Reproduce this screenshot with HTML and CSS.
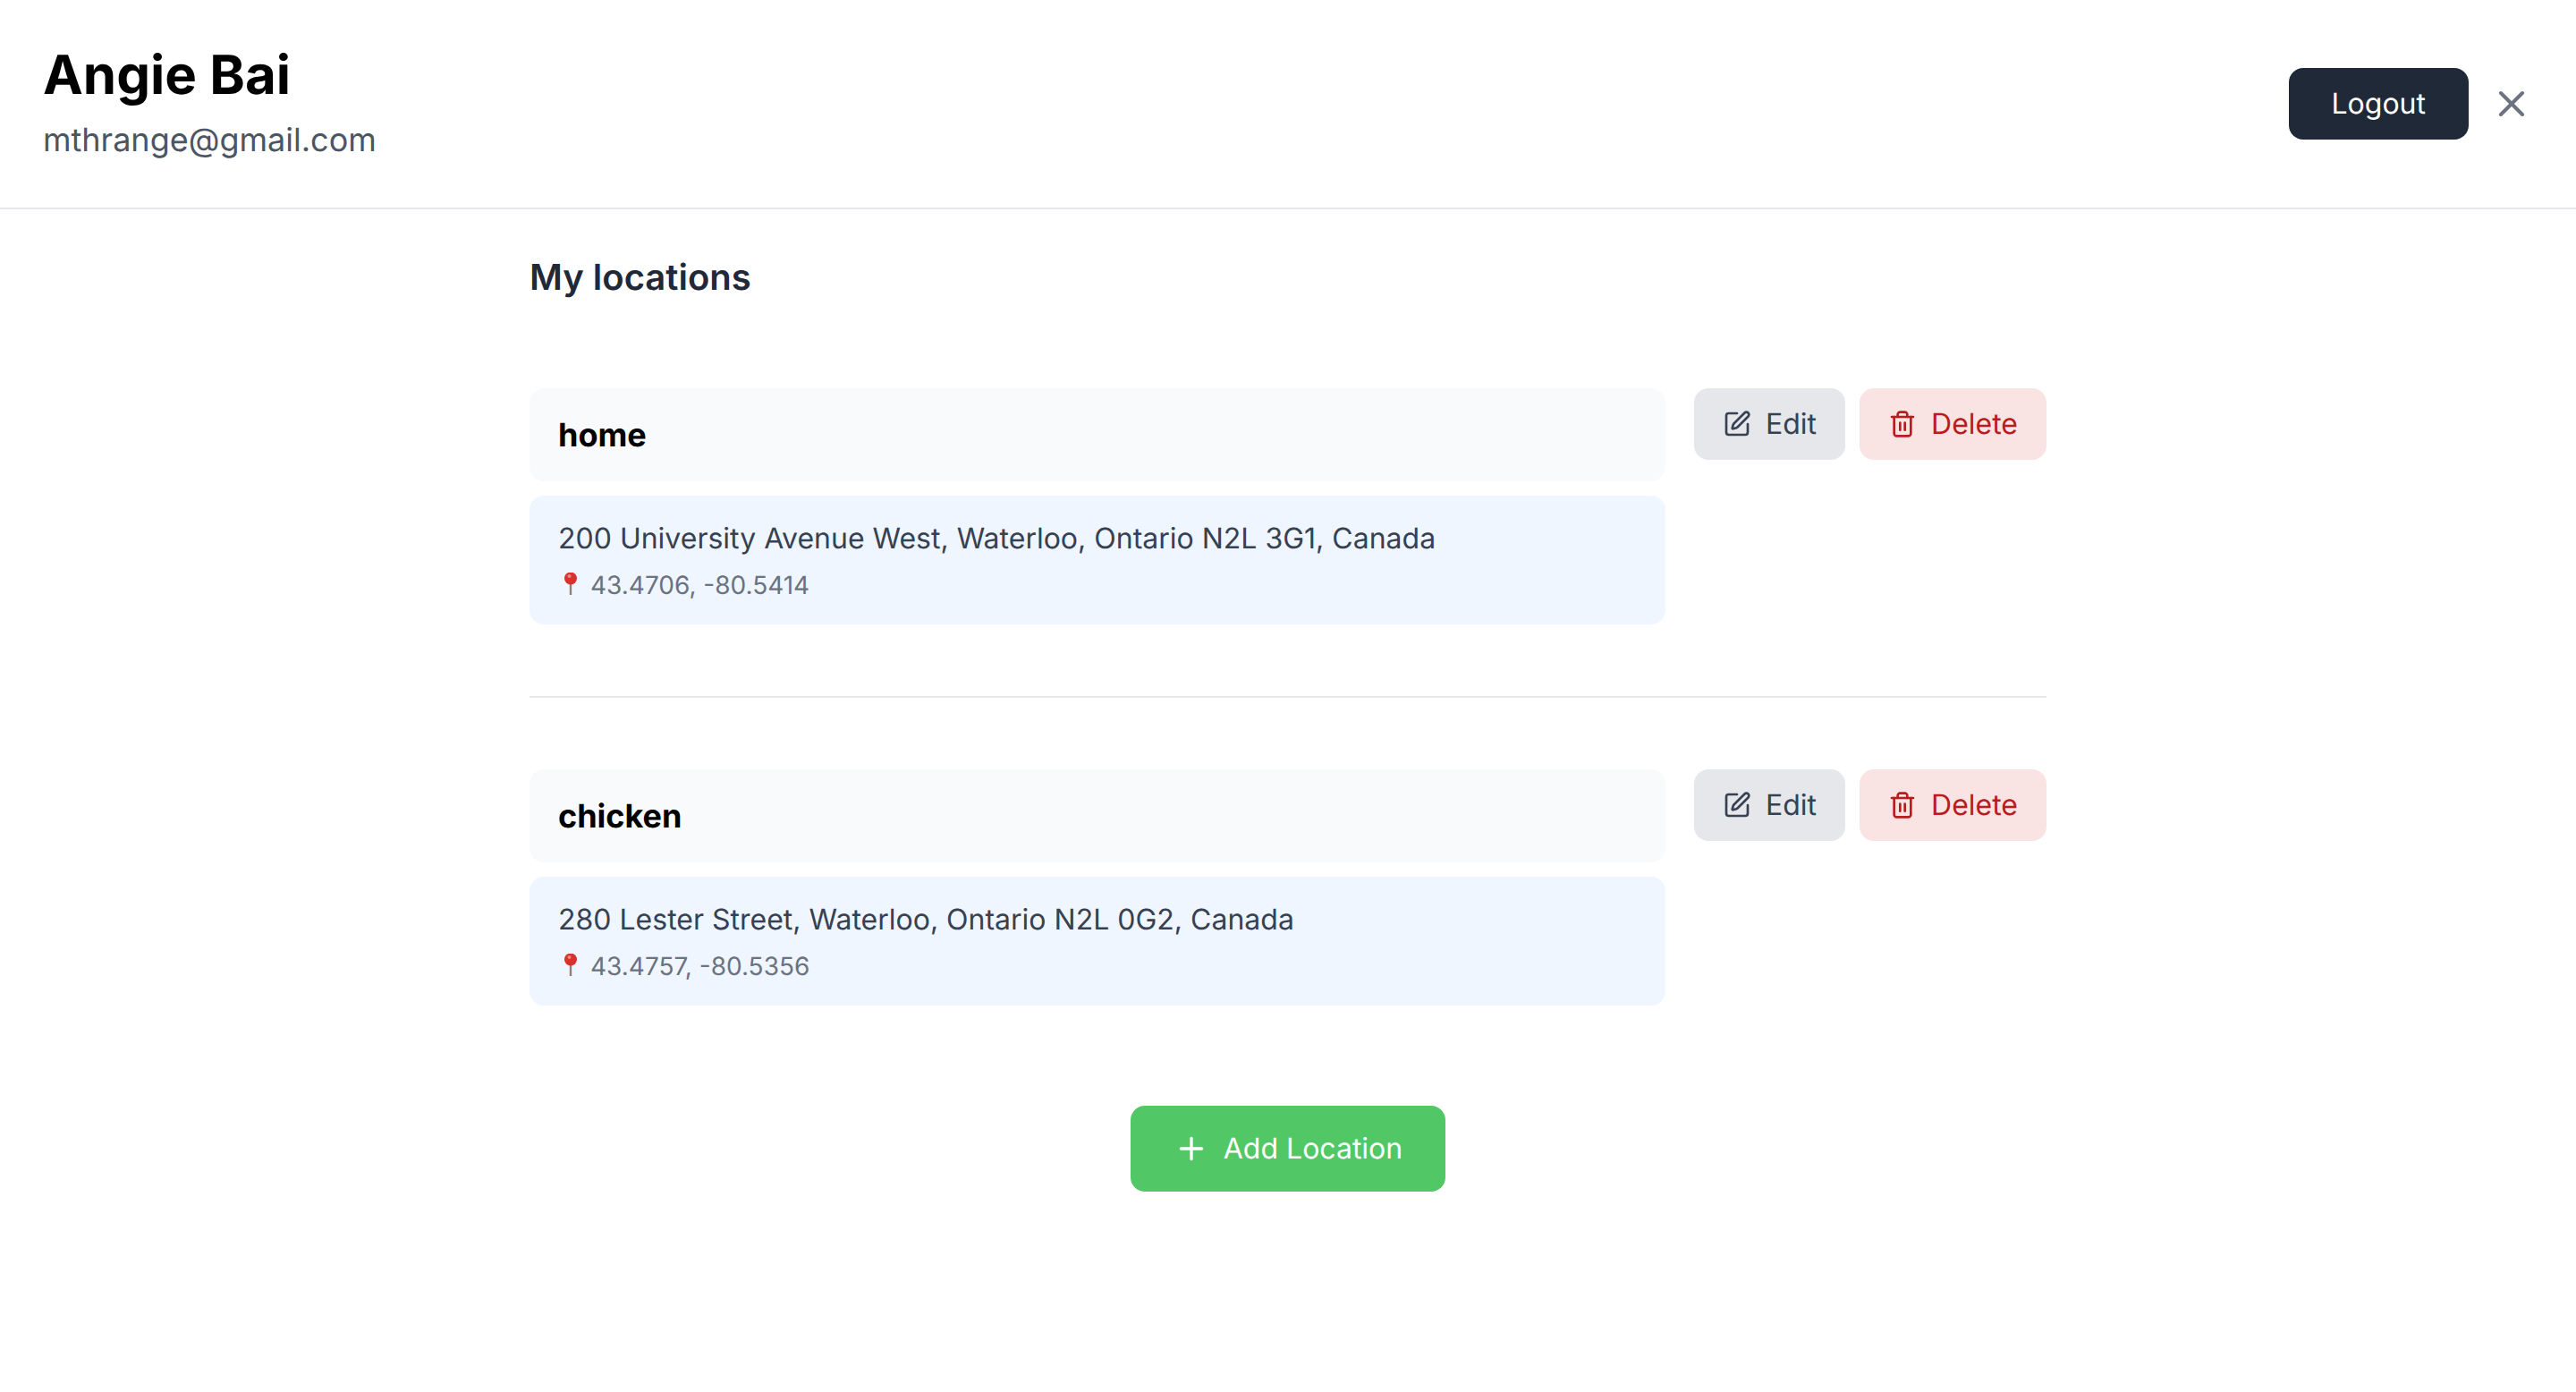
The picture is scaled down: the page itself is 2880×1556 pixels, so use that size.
FILE: index.html
```html
<!DOCTYPE html>
<html lang="en">
<head>
    <meta charset="UTF-8">
    <meta name="viewport" content="width=device-width, initial-scale=1.0">
    <title>My locations</title>
    <link rel="stylesheet" href="styles.css">
</head>
<body>
    <header class="profile-header">
        <div>
            <h1 class="profile-name">Angie Bai</h1>
            <p class="profile-email">mthrange@gmail.com</p>
        </div>
        <div class="header-actions">
            <button class="btn btn-logout" type="button">Logout</button>
            <button class="btn-close" type="button" aria-label="Close">
                <svg class="icon-close" viewBox="0 0 24 24"><path d="M18 6 6 18"/><path d="m6 6 12 12"/></svg>
            </button>
        </div>
    </header>

    <main class="container">
        <h2 class="section-title">My locations</h2>

        <div class="location-row">
            <div class="location-info">
                <div class="location-name">home</div>
                <div class="location-address">
                    <p class="address-line">200 University Avenue West, Waterloo, Ontario N2L 3G1, Canada</p>
                    <p class="coords"><svg class="pin" viewBox="0 0 28 28"><path class="pin-stem" d="M14 12v13"/><circle class="pin-head" cx="14" cy="6.5" r="7"/><circle class="pin-shine" cx="12.5" cy="4" r="2"/></svg>43.4706, -80.5414</p>
                </div>
            </div>
            <div class="location-actions">
                <button class="btn btn-edit" type="button">
                    <svg class="icon" viewBox="0 0 24 24"><path d="M12 3H5a2 2 0 0 0-2 2v14a2 2 0 0 0 2 2h14a2 2 0 0 0 2-2v-7"/><path d="M18.375 2.625a1 1 0 0 1 3 3l-9.013 9.014a2 2 0 0 1-.853.505l-2.873.84a.5.5 0 0 1-.62-.62l.84-2.873a2 2 0 0 1 .506-.852z"/></svg>
                    Edit
                </button>
                <button class="btn btn-delete" type="button">
                    <svg class="icon" viewBox="0 0 24 24"><path d="M3 6h18"/><path d="M19 6v14c0 1-1 2-2 2H7c-1 0-2-1-2-2V6"/><path d="M8 6V4c0-1 1-2 2-2h4c1 0 2 1 2 2v2"/><path d="M10 11v6"/><path d="M14 11v6"/></svg>
                    Delete
                </button>
            </div>
        </div>

        <hr class="divider">

        <div class="location-row">
            <div class="location-info">
                <div class="location-name">chicken</div>
                <div class="location-address">
                    <p class="address-line">280 Lester Street, Waterloo, Ontario N2L 0G2, Canada</p>
                    <p class="coords"><svg class="pin" viewBox="0 0 28 28"><path class="pin-stem" d="M14 12v13"/><circle class="pin-head" cx="14" cy="6.5" r="7"/><circle class="pin-shine" cx="12.5" cy="4" r="2"/></svg>43.4757, -80.5356</p>
                </div>
            </div>
            <div class="location-actions">
                <button class="btn btn-edit" type="button">
                    <svg class="icon" viewBox="0 0 24 24"><path d="M12 3H5a2 2 0 0 0-2 2v14a2 2 0 0 0 2 2h14a2 2 0 0 0 2-2v-7"/><path d="M18.375 2.625a1 1 0 0 1 3 3l-9.013 9.014a2 2 0 0 1-.853.505l-2.873.84a.5.5 0 0 1-.62-.62l.84-2.873a2 2 0 0 1 .506-.852z"/></svg>
                    Edit
                </button>
                <button class="btn btn-delete" type="button">
                    <svg class="icon" viewBox="0 0 24 24"><path d="M3 6h18"/><path d="M19 6v14c0 1-1 2-2 2H7c-1 0-2-1-2-2V6"/><path d="M8 6V4c0-1 1-2 2-2h4c1 0 2 1 2 2v2"/><path d="M10 11v6"/><path d="M14 11v6"/></svg>
                    Delete
                </button>
            </div>
        </div>

        <div class="add-wrap">
            <button class="btn btn-add" type="button">
                <svg class="icon icon-add" viewBox="0 0 24 24"><path d="M5 12h14"/><path d="M12 5v14"/></svg>
                Add Location
            </button>
        </div>
    </main>
</body>
</html>
```

FILE: styles.css
```css
body {
    margin: 0;
    background-color: #fff;
    color: #000;
    font-family: "Inter", "Liberation Sans", sans-serif;
    text-rendering: geometricPrecision;
}

p, h1, h2 {
    margin: 0;
}

.profile-header {
    display: flex;
    justify-content: space-between;
    align-items: center;
    padding: 48px;
    border-bottom: 2px solid #e5e7eb;
}

.profile-name {
    font-size: 60px;
    line-height: 72px;
    font-weight: 700;
}

.profile-email {
    margin-top: 8px;
    font-size: 36px;
    line-height: 56px;
    color: #4b5563;
}

.header-actions {
    display: flex;
    align-items: center;
    gap: 24px;
}

.btn {
    display: flex;
    align-items: center;
    border: none;
    border-radius: 16px;
    font-family: inherit;
    font-size: 32px;
    line-height: 48px;
    text-rendering: inherit;
    cursor: pointer;
}

.btn-logout {
    padding: 16px 48px;
    background-color: #1f2937;
    color: #fff;
}

.btn-close {
    display: flex;
    padding: 0;
    border: none;
    background: none;
    cursor: pointer;
}

.icon-close {
    width: 48px;
    height: 48px;
    fill: none;
    stroke: #6b7280;
    stroke-width: 2;
    stroke-linecap: round;
    stroke-linejoin: round;
}

.container {
    width: 1696px;
    margin: 0 auto;
    padding-top: 48px;
}

.section-title {
    font-size: 40px;
    line-height: 56px;
    font-weight: 600;
    color: #1f2937;
    margin-bottom: 96px;
}

.location-row {
    display: flex;
    align-items: flex-start;
    gap: 32px;
}

.location-info {
    flex: 1;
    display: flex;
    flex-direction: column;
    gap: 16px;
}

.location-name {
    padding: 24px 32px;
    background-color: #f9fafb;
    border-radius: 16px;
    font-size: 36px;
    line-height: 56px;
    font-weight: 700;
}

.location-address {
    padding: 24px 32px;
    background-color: #eff6ff;
    border-radius: 16px;
}

.address-line {
    font-size: 32px;
    line-height: 48px;
    color: #374151;
}

.coords {
    display: flex;
    align-items: center;
    margin-top: 8px;
    font-size: 28px;
    line-height: 40px;
    color: #6b7280;
}

.pin {
    width: 28px;
    height: 28px;
    margin-right: 8px;
}

.pin-head {
    fill: #d9322e;
}

.pin-stem {
    stroke: #8f7f76;
    stroke-width: 2.4;
    fill: none;
}

.pin-shine {
    fill: #f08a80;
}

.location-actions {
    display: flex;
    gap: 16px;
}

.icon {
    width: 32px;
    height: 32px;
    margin-right: 16px;
    fill: none;
    stroke: currentColor;
    stroke-width: 2;
    stroke-linecap: round;
    stroke-linejoin: round;
}

.btn-edit {
    padding: 16px 32px;
    background-color: #e5e7eb;
    color: #374151;
}

.btn-delete {
    padding: 16px 32px;
    background-color: #fae3e3;
    color: #b91c1c;
}

.divider {
    margin: 80px 0;
    border: none;
    border-top: 2px solid #e5e7eb;
}

.add-wrap {
    display: flex;
    justify-content: center;
    margin-top: 112px;
}

.btn-add {
    padding: 24px 48px;
    background-color: #51c765;
    color: #fff;
}

.icon-add {
    width: 40px;
    height: 40px;
}
```
